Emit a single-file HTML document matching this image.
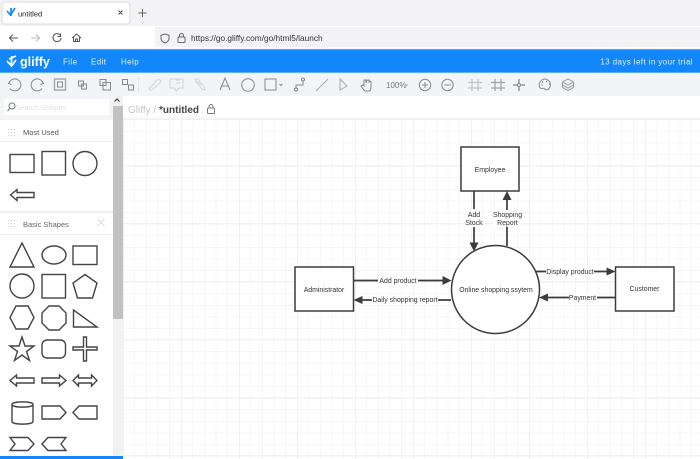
<!DOCTYPE html>
<html><head><meta charset="utf-8"><style>
html,body{margin:0;padding:0;width:700px;height:459px;overflow:hidden;background:#fff}
svg{display:block;filter:blur(.3px)}
text{font-family:"Liberation Sans",sans-serif}
</style></head><body>
<svg width="700" height="459" viewBox="0 0 700 459" xmlns="http://www.w3.org/2000/svg">
<defs>
<pattern id="g" x="123" y="119.500" width="11.6" height="11.6" patternUnits="userSpaceOnUse"><path d="M0 0H11.6M0 0V11.6" stroke="#ececec" stroke-width="1" fill="none"/></pattern>
<pattern id="m" x="123" y="107.500" width="58" height="58" patternUnits="userSpaceOnUse"><path d="M0 0H58M0 0V58" stroke="#e6e6e6" stroke-width="1" fill="none"/></pattern>
</defs>
<!-- browser chrome -->
<rect width="700" height="50" fill="#f3f3f6"/>
<rect x="0" y="26" width="700" height="1" fill="#fff"/>
<rect x="0" y="27" width="155" height="21" fill="#fff"/>
<rect x="0" y="47" width="700" height="1" fill="#fff"/>
<rect x="2" y="2" width="128" height="22" rx="3" fill="#fff" stroke="#dcdce0"/>
<path d="M7 11L10.500 15L15 8M11 8V16" fill="none" stroke="#1187fb" stroke-width="1.700"/>
<text x="18" y="16.500" font-size="7.500" fill="#222">untitled</text>
<path d="M118.500 10.500l4 4m0-4l-4 4" stroke="#555" fill="none"/>
<path d="M142.500 9v8M138.500 13h8" stroke="#666" fill="none"/>
<path d="M18 38H10M13 34.500L9.500 38L13 41.500" stroke="#555" fill="none"/>
<path d="M39 38H31M36 34.500L39.500 38L36 41.500" stroke="#bbb" fill="none"/>
<path d="M60 35a4 4 0 1 0 1 3M60.500 33.500v3h-3" stroke="#555" fill="none"/>
<path d="M72 38l4.500-4 4.500 4M73.500 37v4.500h6V37M75.500 41.500v-2.500h2v2.500" stroke="#555" fill="none"/>
<path d="M165 34l4 1.300v3c0 2.500-2 4-4 4.700c-2-.7-4-2.200-4-4.700v-3z" stroke="#666" fill="none"/>
<rect x="178" y="37" width="7" height="5.500" rx="1" stroke="#666" fill="none"/>
<path d="M179.500 37v-1.500a2 2 0 0 1 4 0V37" stroke="#666" fill="none"/>
<text x="191" y="41" font-size="8.300" fill="#333">https://go.gliffy.com/go/html5/launch</text>
<!-- blue nav -->
<rect x="0" y="49.500" width="700" height="23" fill="#1187fb"/>
<rect x="0" y="49" width="700" height="1" fill="#4fa6fb"/>
<path d="M7 61l4.500 5 4.500-6M12 56l-1 10M9 59l7-3" stroke="#fff" stroke-width="1.700" fill="none"/>
<text x="20" y="66" font-size="12.500" font-weight="bold" fill="#fff">gliffy</text>
<text x="63" y="64.500" font-size="8" fill="#e3f0ff" letter-spacing=".4">File</text>
<text x="91" y="64.500" font-size="8" fill="#e3f0ff" letter-spacing=".4">Edit</text>
<text x="121" y="64.500" font-size="8" fill="#e3f0ff" letter-spacing=".4">Help</text>
<text x="693" y="64.500" font-size="8" fill="#e3f0ff" text-anchor="end" letter-spacing=".4">13 days left in your trial</text>
<!-- toolbar -->
<rect x="0" y="72.500" width="700" height="24" fill="#f3f4f7"/>
<rect x="0" y="72" width="700" height="1" fill="#5eaefa"/>
<g fill="none" stroke="#888" stroke-width="1">
<path d="M10 81l-1.500 2.500 3 1M9 83.500a6 6 0 1 1 1 5"/>
<path d="M42 81l1.500 2.500-3 1M43 83.500a6 6 0 1 0-1 5"/>
<rect x="54.500" y="79" width="11" height="11" stroke-width="1.500" stroke="#aaa"/><rect x="57.500" y="82" width="5" height="5"/>
<rect x="78.500" y="81" width="5" height="5"/><rect x="81.500" y="84" width="5" height="5"/>
<rect x="100" y="79.500" width="6" height="6"/><rect x="103" y="82.500" width="7.500" height="7.500"/>
<rect x="122.500" y="79.500" width="5" height="5"/><rect x="128.500" y="85" width="5" height="5"/>
<g stroke="#d4d4d6"><path d="M150 88l7-8a2 2 0 0 1 3 3l-8 7a2 2 0 0 1-3-2z"/><path d="M170 79h13v9h-4l-2.500 3-2.500-3h-4z"/><path d="M176 80h4M176 83h4"/><path d="M197 81l4 4M195 79l3 0 6 8 1 3-3-1-6-7z"/></g>
<path d="M220 90l5-12 5 12M222 86h6"/>
<circle cx="248" cy="85" r="6.300"/>
<rect x="265" y="79" width="11" height="11"/><path d="M279.500 84l1.500 1.500 1.500-1.500"/>
<circle cx="303" cy="79.500" r="1.500"/><circle cx="296" cy="89.500" r="1.500"/><path d="M296 88v-3h7v-4"/>
<path d="M316 91l12-12" stroke="#aaa"/>
<path d="M340 79v11l7-4z" stroke="#aaa"/>
<path d="M363 89l-2-3 2-1 1 1v-6l2 0v3l1-3 2 0v2l1-1 1 1v6l-1 3h-5z"/>
<circle cx="425" cy="85" r="5.700"/><path d="M422 85h6M425 82v6"/>
<circle cx="447.500" cy="85" r="5.700"/><path d="M444.500 85h6"/>
<g stroke="#c4c4c4" stroke-width="1.300"><path d="M472 79v12M478 79v12M468 82.500h14M468 88h14"/></g>
<g stroke="#a4a4a4" stroke-width="1.300"><path d="M495 79v12M501 79v12M491 82.500h14M491 88h14"/></g>
<path d="M519 79v12M513 85h12" stroke-width="1.300"/><circle cx="519" cy="85" r="1.500" fill="#f3f4f7"/>
<path d="M545 79a6 6 0 0 0-5.500 8c1.500 3 3 .5 4.500 1.500s2 2 4 1a6.500 6.500 0 0 0 2.500-5a6 6 0 0 0-5.500-5.500z"/>
<path d="M542 82h1M546 81.500h1M549 84h1M541.500 85h1" stroke-width="1.500"/>
<path d="M568 79l5.500 3-5.500 3-5.500-3zM562.500 85l5.500 3 5.500-3M562.500 87.500l5.500 3 5.500-3M562.500 82v6M573.500 82v6" stroke="#a4a4a4"/>
</g>
<path d="M138.500 77v16" stroke="#e6e6ea"/>
<text x="386" y="88" font-size="8" fill="#777">100%</text>
<path d="M405 84l1.500 1.500L408 84" stroke="#bbb" fill="none"/>
<!-- title bar -->
<rect x="123" y="96" width="577" height="24" fill="#fff"/>
<rect x="123" y="117.500" width="577" height="2" fill="#f6f6f7"/>
<text x="128" y="113" font-size="10" fill="#c5c5c8">Gliffy /</text>
<text x="159" y="113" font-size="10" font-weight="bold" fill="#444">*untitled</text>
<rect x="207.500" y="108" width="7" height="5.500" rx="1" stroke="#777" fill="none"/>
<path d="M209 108v-1.500a2 2 0 0 1 4 0v1.500" stroke="#777" fill="none"/>
<!-- canvas -->
<rect x="123" y="119.500" width="577" height="340" fill="#fff"/>
<rect x="123" y="119.500" width="577" height="340" fill="url(#g)"/>
<rect x="123" y="119.500" width="577" height="340" fill="url(#m)"/>
<!-- sidebar -->
<rect x="0" y="96" width="123" height="363" fill="#fff"/>
<rect x="0" y="96" width="113" height="24" fill="#f3f4f7"/>
<rect x="4" y="99" width="105" height="16" fill="#fff"/>
<circle cx="12" cy="106" r="3" stroke="#777" fill="none"/><path d="M10 108l-2.500 3" stroke="#777"/>
<text x="15" y="110" font-size="7.500" fill="#e2e2e5">Search Shapes</text>
<rect x="113" y="96" width="10" height="360" fill="#f1f1f2"/>
<rect x="113" y="106" width="10" height="213" fill="#c1c1c1"/>
<path d="M114.500 101.500l2.500-2.500 2.500 2.500" stroke="#444" stroke-width="1.200" fill="none"/>
<rect x="0" y="141" width="113" height="1" fill="#f0f0f1"/>
<rect x="0" y="211" width="113" height="2" fill="#f0f0f1"/>
<rect x="0" y="234" width="113" height="1" fill="#f0f0f1"/>
<g fill="#ccc"><rect x="8" y="129" width="1" height="1"/><rect x="11" y="129" width="1" height="1"/><rect x="14" y="129" width="1" height="1"/><rect x="8" y="132" width="1" height="1"/><rect x="11" y="132" width="1" height="1"/><rect x="14" y="132" width="1" height="1"/><rect x="8" y="135" width="1" height="1"/><rect x="11" y="135" width="1" height="1"/><rect x="14" y="135" width="1" height="1"/>
<rect x="8" y="220" width="1" height="1"/><rect x="11" y="220" width="1" height="1"/><rect x="14" y="220" width="1" height="1"/><rect x="8" y="223" width="1" height="1"/><rect x="11" y="223" width="1" height="1"/><rect x="14" y="223" width="1" height="1"/><rect x="8" y="226" width="1" height="1"/><rect x="11" y="226" width="1" height="1"/><rect x="14" y="226" width="1" height="1"/></g>
<text x="23" y="135" font-size="7.500" fill="#555">Most Used</text>
<text x="23" y="227" font-size="7.500" fill="#666">Basic Shapes</text>
<path d="M97.500 219l7 7m0-7l-7 7" stroke="#ddd" fill="none"/>
<g fill="#fff" stroke="#444" stroke-width="1.400">
<rect x="10" y="154.500" width="24" height="18"/>
<rect x="42" y="151.500" width="23.500" height="23.500"/>
<circle cx="85" cy="163.500" r="12"/>
<path d="M10.500 195l6.500-5.500v3h17v5H17v3z"/>
<path d="M22 243l12 24H10z"/>
<ellipse cx="54" cy="255" rx="12" ry="9"/>
<rect x="73" y="246" width="24" height="18.500"/>
<circle cx="22" cy="286" r="12"/>
<rect x="42" y="274.500" width="23.500" height="23.500"/>
<path d="M85 274.500l12 8.500-4.500 15h-15L73 283z"/>
<path d="M16 306h12l6 11.500-6 11.500H16l-6-11.500z"/>
<path d="M49 306h10l7 7v10l-7 7H49l-7-7v-10z"/>
<path d="M73.500 310v17H97z"/>
<path d="M22 337l3 9h9l-7.500 5.500 3 9L22 355l-7.500 5.500 3-9L10 346h9z"/>
<rect x="42" y="340" width="23.500" height="18" rx="5"/>
<path d="M83.500 337h3v10H97v3H86.500v11h-3V350H73v-3h10.500z"/>
<path d="M10 380.500l6.500-5.500v3h17.500v5H16.500v3z"/>
<path d="M66 380.500l-6.500-5.500v3H42v5h17.500v3z"/>
<path d="M73 380.500l5.500-5.500v3h13v-3l5.500 5.500-5.500 5.500v-3h-13v3z"/>
<path d="M12 404.500v17c0 3.500 21 3.500 21 0v-17c0-3.500-21-3.500-21 0c0 3.500 21 3.500 21 0"/>
<path d="M42 406h18l6 6.500-6 6.500H42z"/>
<path d="M97 406H79l-6 6.500 6 6.500h18z"/>
<path d="M10 437.500h18l6 6.500-6 6.500H10l5-6.500z"/>
<path d="M66 437.500H48l-6 6.500 6 6.500h18l-5-6.500z"/>
</g>
<rect x="0" y="456" width="123" height="3" fill="#1187fb"/>
<!-- diagram -->
<g fill="#fff" stroke="#3c3c3c" stroke-width="1.500">
<rect x="461" y="147" width="58" height="44"/>
<rect x="295" y="267" width="58.500" height="44"/>
<rect x="615.500" y="267" width="58.500" height="44"/>
<circle cx="495.500" cy="289.500" r="44"/>
</g>
<g stroke="#3c3c3c" stroke-width="1.700" fill="none">
<path d="M474 191V244"/>
<path d="M507 246V197"/>
<path d="M353.500 280.500H446"/>
<path d="M451 300H358"/>
<path d="M535 271.500H610"/>
<path d="M615.500 297.500H544"/>
</g>
<g fill="#3c3c3c">
<path d="M474 251.500l-4.500-9h9z"/>
<path d="M507 191l-4.500 9h9z"/>
<path d="M451.500 280.500l-9-4.500v9z"/>
<path d="M353.500 300l9-4v8z"/>
<path d="M615.500 271.500l-9-4v8z"/>
<path d="M539 297.500l9-4v8z"/>
</g>
<g font-size="6.900" fill="#333" text-anchor="middle">
<rect x="466" y="209" width="16" height="18" fill="#fff"/>
<rect x="493" y="210" width="28" height="17" fill="#fff"/>
<rect x="378" y="276" width="40" height="9" fill="#fff"/>
<rect x="372" y="295" width="66" height="9" fill="#fff"/>
<rect x="546" y="267" width="48" height="9" fill="#fff"/>
<rect x="569" y="293" width="28" height="9" fill="#fff"/>
<text x="490" y="172">Employee</text>
<text x="324" y="292">Administrator</text>
<text x="496" y="292">Online shopping ssytem</text>
<text x="644.500" y="291">Customer</text>
<text x="474" y="217">Add</text>
<text x="474" y="225">Stock</text>
<text x="507.500" y="217">Shopping</text>
<text x="507.500" y="225">Report</text>
<text x="398" y="283">Add product</text>
<text x="405" y="302">Daily shopping report</text>
<text x="570" y="274">Display product</text>
<text x="582.500" y="300">Payment</text>
</g>
</svg>
</body></html>
